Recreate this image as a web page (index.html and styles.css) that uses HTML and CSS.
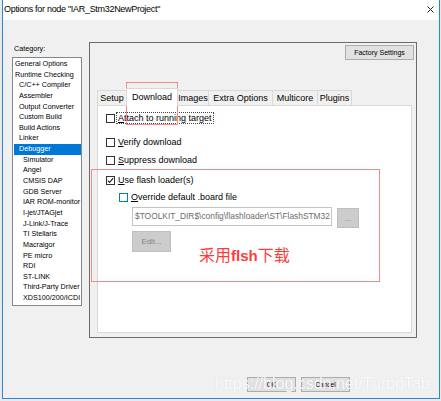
FILE: index.html
```html
<!DOCTYPE html>
<html>
<head>
<meta charset="utf-8">
<link rel="stylesheet" href="styles.css">
</head>
<body>
<div class="window">
  <div class="titlebar">
    <span class="title">Options for node "IAR_Stm32NewProject"</span>
    <svg class="close" width="7" height="7" viewBox="0 0 7 7"><path d="M0.5 0.5 L6.5 6.5 M6.5 0.5 L0.5 6.5" stroke="#222" stroke-width="1"/></svg>
  </div>
  <div class="client">
    <div class="main">
      <div class="category">
        <div class="cat-label">Category:</div>
        <ul class="cat-list">
          <li>General Options</li>
          <li>Runtime Checking</li>
          <li class="l1">C/C++ Compiler</li>
          <li class="l1">Assembler</li>
          <li class="l1">Output Converter</li>
          <li class="l1">Custom Build</li>
          <li class="l1">Build Actions</li>
          <li class="l1">Linker</li>
          <li class="l1 sel">Debugger</li>
          <li class="l2">Simulator</li>
          <li class="l2">Angel</li>
          <li class="l2">CMSIS DAP</li>
          <li class="l2">GDB Server</li>
          <li class="l2">IAR ROM-monitor</li>
          <li class="l2">I-jet/JTAGjet</li>
          <li class="l2">J-Link/J-Trace</li>
          <li class="l2">TI Stellaris</li>
          <li class="l2">Macraigor</li>
          <li class="l2">PE micro</li>
          <li class="l2">RDI</li>
          <li class="l2">ST-LINK</li>
          <li class="l2">Third-Party Driver</li>
          <li class="l2">XDS100/200/ICDI</li>
        </ul>
      </div>
      <div class="panel">
        <div class="panel-top"><div class="btn factory">Factory Settings</div></div>
        <div class="tabs">
          <div class="tab t-setup">Setup</div>
          <div class="tab t-download active">Download</div>
          <div class="tab t-images">Images</div>
          <div class="tab t-extra">Extra Options</div>
          <div class="tab t-multi">Multicore</div>
          <div class="tab t-plugins">Plugins</div>
        </div>
        <div class="tab-body">
          <div class="cb-row r1"><span class="cb"></span><span class="lbl focus"><u>A</u>ttach to running target</span></div>
          <div class="cb-row r2"><span class="cb"></span><span class="lbl"><u>V</u>erify download</span></div>
          <div class="cb-row r3"><span class="cb"></span><span class="lbl"><u>S</u>uppress download</span></div>
          <div class="cb-row r4"><span class="cb"><svg width="7" height="7" viewBox="0 0 7 7"><path d="M0.8 3.6 L2.6 5.4 L6.2 1.2" fill="none" stroke="#222" stroke-width="1.1"/></svg></span><span class="lbl"><u>U</u>se flash loader(s)</span></div>
          <div class="cb-row r5"><span class="cb cb-blue"></span><span class="lbl"><u>O</u>verride default .board file</span></div>
          <div class="path-row">
            <div class="path-input">$TOOLKIT_DIR$\config\flashloader\ST\FlashSTM32</div>
            <div class="btn dis browse">...</div>
          </div>
          <div class="btn dis edit">Edit...</div>
        </div>
      </div>
    </div>
    <div class="footer">
      <div class="btn fbtn">OK</div>
      <div class="btn fbtn">Cancel</div>
    </div>
  </div>
</div>
<div class="mark mark1"></div>
<div class="mark mark2"></div>
<div class="note">采用<b>flsh</b>下载</div>
<div class="watermark">https://blog.csdn.net/TurboTab</div>
</body>
</html>
```
FILE: styles.css
```css
* { box-sizing: border-box; margin: 0; padding: 0; }
body {
  margin: 0;
  width: 441px;
  height: 401px;
  overflow: hidden;
  position: relative;
  padding-left: 2px;
  background: #e9e9e9;
  font-family: "Liberation Sans", Arial, sans-serif;
  color: #000;
}
.window {
  width: 438px;
  height: 399px;
  border: 1px solid #2f86d6;
  border-top: none;
  background: #f0f0f0;
  display: flex;
  flex-direction: column;
}
.titlebar {
  height: 20px;
  background: #fff;
  display: flex;
  align-items: center;
  justify-content: space-between;
  padding: 0 5px 0 1px;
  flex: none;
}
.title { font-size: 9px; letter-spacing: -0.3px; margin-top: -2px; white-space: nowrap; }
.close { margin-top: -2px; }
.client {
  flex: 1;
  display: flex;
  flex-direction: column;
  padding: 22px 0 0 9px;
}
.main { display: flex; gap: 7px; align-items: flex-start; }
.category { width: 70px; display: flex; flex-direction: column; flex: none; }
.cat-label { height: 15px; font-size: 7.2px; line-height: 14px; padding-left: 2px; }
.cat-list {
  height: 249px;
  background: #fff;
  border: 1px solid #828790;
  padding-top: 1px;
  list-style: none;
  font-size: 7.2px;
}
.cat-list li { height: 10.65px; line-height: 10.65px; white-space: nowrap; padding-left: 2px; }
.cat-list .l1 { padding-left: 6px; }
.cat-list .l2 { padding-left: 10px; }
.cat-list .sel { background: #0078d7; color: #fff; margin-left: 1px; padding-left: 5px; }
.panel {
  width: 328px;
  height: 296px;
  border: 1px solid #6b6b6b;
  display: flex;
  flex-direction: column;
  flex: none;
}
.panel-top { display: flex; justify-content: flex-end; padding: 2px 2px 0 0; }
.btn {
  background: #e1e1e1;
  border: 1px solid #adadad;
  display: flex;
  align-items: center;
  justify-content: center;
  white-space: nowrap;
}
.factory { width: 69px; height: 15px; font-size: 7px; }
.tabs { display: flex; align-items: flex-end; height: 17px; margin: 28px 0 0 7px; }
.tab {
  height: 15px;
  border: 1px solid #d9d9d9;
  border-bottom: none;
  margin-right: -1px;
  font-size: 9px;
  display: flex;
  align-items: center;
  justify-content: center;
  background: #f0f0f0;
  white-space: nowrap;
}
.tab.active {
  height: 18px;
  margin-bottom: -1px;
  background: #fff;
  position: relative;
  z-index: 1;
  padding-bottom: 1px;
}
.t-setup { width: 30px; }
.t-download { width: 52px; }
.t-images { width: 32px; }
.t-extra { width: 65px; }
.t-multi { width: 46px; }
.t-plugins { width: 35px; }
.tab-body {
  width: 315px;
  height: 228px;
  margin-left: 7px;
  background: #fff;
  border: 1px solid #d9d9d9;
  padding-left: 8px;
  display: flex;
  flex-direction: column;
  align-items: flex-start;
}
.cb-row { display: flex; align-items: center; height: 12px; font-size: 9px; white-space: nowrap; }
.r1 { margin-top: 6px; }
.r2 { margin-top: 12px; }
.r3 { margin-top: 6px; }
.r4 { margin-top: 8px; }
.r5 { margin-top: 5px; padding-left: 13px; }
.cb {
  width: 9px;
  height: 9px;
  border: 1px solid #333;
  background: #fff;
  margin-right: 1px;
  flex: none;
  display: flex;
  align-items: center;
  justify-content: center;
}
.cb-blue { border-color: #0078d7; }
.lbl { padding: 0 1px; line-height: 10px; border: 1px solid transparent; }
.lbl.focus { border: 1px dotted #444; }
.path-row { display: flex; align-items: flex-start; margin: 4px 0 0 26px; }
.path-input {
  width: 200px;
  height: 19px;
  border: 1px solid #c4c4c4;
  background: #fff;
  color: #6d6d6d;
  font-size: 8.4px;
  line-height: 17px;
  padding-left: 2px;
  overflow: hidden;
  white-space: nowrap;
}
.btn.dis { background: #cccccc; border-color: #bfbfbf; color: #838383; }
.browse { width: 22px; height: 20px; margin: 1px 0 0 5px; font-size: 7px; }
.edit { width: 39px; height: 21px; margin: 3px 0 0 26px; font-size: 7.8px; }
.footer { display: flex; gap: 5px; margin: 39px 0 0 235px; }
.fbtn { width: 49px; height: 15px; font-size: 6.5px; }
.mark { position: absolute; border: 1px solid #f08c8c; }
.mark1 { left: 126px; top: 82px; width: 52px; height: 43px; }
.mark2 { left: 91px; top: 169px; width: 289px; height: 113px; }
.note {
  position: absolute;
  left: 199px;
  top: 246px;
  font-size: 16px;
  line-height: 16px;
  color: #ff3b3b;
  font-family: "Noto Sans CJK SC", sans-serif;
  white-space: nowrap;
}
.note b { font-family: "Liberation Sans", sans-serif; font-weight: bold; font-size: 15px; }
.watermark {
  position: absolute;
  left: 215px;
  top: 375px;
  font-size: 16px;
  color: rgba(255, 255, 255, 0.92);
  text-shadow: 0 0 1px rgba(0, 0, 0, 0.12);
  white-space: nowrap;
}
```
